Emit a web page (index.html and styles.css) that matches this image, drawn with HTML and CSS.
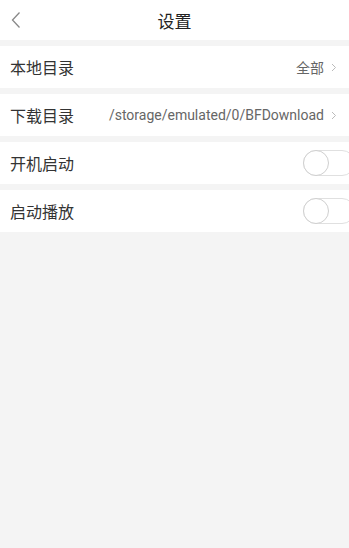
FILE: index.html
```html
<!DOCTYPE html>
<html>
	<head>
		<meta charset="utf-8">
		<link rel="stylesheet" href="styles.css">
	</head>
	<body>
		<div class="header">
			<svg class="back" width="12" height="18" viewBox="0 0 12 18">
				<polyline points="9.5,1.5 2.5,9 9.5,16.5" fill="none" stroke="#888" stroke-width="1.3"/>
			</svg>
			<div class="title">设置</div>
		</div>

		<div class="row">
			<span class="label">本地目录</span>
			<span class="value">全部</span>
			<svg class="arrow" width="6" height="9" viewBox="0 0 6 9">
				<polyline points="1,1 4.5,4.5 1,8" fill="none" stroke="#bbb" stroke-width="1"/>
			</svg>
		</div>
		<div class="row">
			<span class="label">下载目录</span>
			<span class="value">/storage/emulated/0/BFDownload</span>
			<svg class="arrow" width="6" height="9" viewBox="0 0 6 9">
				<polyline points="1,1 4.5,4.5 1,8" fill="none" stroke="#bbb" stroke-width="1"/>
			</svg>
		</div>
		<div class="row">
			<span class="label">开机启动</span>
			<span class="switch"><span class="knob"></span></span>
		</div>
		<div class="row">
			<span class="label">启动播放</span>
			<span class="switch"><span class="knob"></span></span>
		</div>
	</body>
</html>
```

FILE: styles.css
```css
html, body {
	margin: 0;
	padding: 0;
}

body {
	background-color: #f4f4f4;
	font-family: Roboto, "Noto Sans CJK SC", sans-serif;
	color: #333;
	overflow: hidden;
}

.header {
	height: 40px;
	background-color: #fff;
	display: flex;
	align-items: center;
	justify-content: center;
	position: relative;
}

.back {
	position: absolute;
	left: 10px;
	top: 11px;
}

.title {
	font-size: 17px;
	color: #222;
}

.row {
	height: 42px;
	margin-top: 6px;
	background-color: #fff;
	display: flex;
	align-items: center;
	padding-left: 10px;
	overflow: hidden;
}

.label {
	font-size: 16px;
	flex: 1;
}

.value {
	font-size: 14px;
	color: #666;
}

.arrow {
	margin: 0 12px 0 7px;
}

.switch {
	width: 50px;
	height: 24px;
	border: 1px solid #e0e0e0;
	border-radius: 13px;
	margin-right: -6px;
	position: relative;
	flex-shrink: 0;
}

.knob {
	position: absolute;
	left: -1px;
	top: -1px;
	width: 24px;
	height: 24px;
	border: 1px solid #cfcfcf;
	border-radius: 50%;
	background-color: #fff;
}
```
